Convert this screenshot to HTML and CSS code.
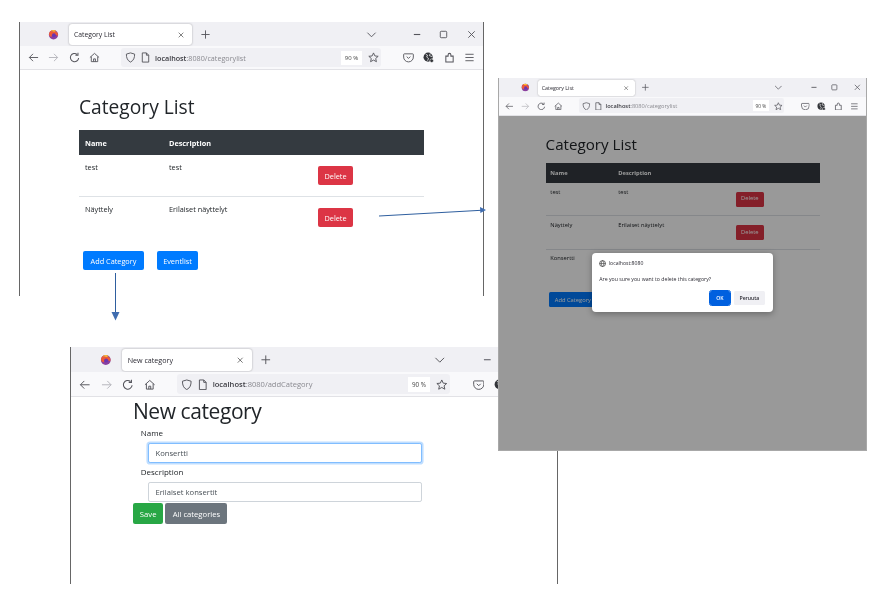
FILE: index.html
```html
<!DOCTYPE html>
<html lang="en">
<head>
<meta charset="utf-8">
<title>Category flow</title>
<link rel="stylesheet" href="styles.css">
</head>
<body>
<svg class="defs" width="0" height="0" aria-hidden="true">
  <symbol id="i-ff" viewBox="0 0 16 16"><circle cx="8" cy="8.300" r="6.800" fill="#8a3f9e"/><path d="M1.500 8c0-3 1.500-5 3.500-6l1 2c2-1 5-1 6.500.5 2 1.500 2.500 3.500 1.500 5.500-4-3-8-1-9 1.500-2-.5-3.500-2-3.500-3.500z" fill="#ee5a35"/><circle cx="8.500" cy="9" r="2.800" fill="#6a35b0"/><path d="M4 3c2-2 6-2 8 0l-3 1z" fill="#ffbd2e"/></symbol>
  <symbol id="i-x" viewBox="0 0 12 12"><path d="M2.500 2.500l7 7M9.500 2.500l-7 7" fill="none" stroke="currentColor" stroke-width="1"/></symbol>
  <symbol id="i-plus" viewBox="0 0 12 12"><path d="M6 1.500v9M1.500 6h9" fill="none" stroke="currentColor" stroke-width="1"/></symbol>
  <symbol id="i-chev" viewBox="0 0 12 12"><path d="M1.500 4l4.500 4.500L10.500 4" fill="none" stroke="currentColor" stroke-width="1"/></symbol>
  <symbol id="i-min" viewBox="0 0 12 12"><path d="M2 6h7" fill="none" stroke="currentColor" stroke-width="1.200"/></symbol>
  <symbol id="i-max" viewBox="0 0 12 12"><rect x="2.500" y="2.500" width="7" height="7" rx="1" fill="none" stroke="currentColor" stroke-width="1"/></symbol>
  <symbol id="i-back" viewBox="0 0 12 12"><path d="M11 6H1.500M5.500 2L1.500 6l4 4" fill="none" stroke="currentColor" stroke-width="1"/></symbol>
  <symbol id="i-fwd" viewBox="0 0 12 12"><path d="M1 6h9.500M6.500 2l4 4-4 4" fill="none" stroke="currentColor" stroke-width="1"/></symbol>
  <symbol id="i-reload" viewBox="0 0 12 12"><path d="M10.500 6.500A4.500 4.500 0 1 1 8.800 2.500M9.800 .8v2.700H7" fill="none" stroke="currentColor" stroke-width="1.100"/></symbol>
  <symbol id="i-home" viewBox="0 0 12 12"><path d="M1 6l5-4.500L11 6M2.500 5v5.500h7V5M5 10.500V7.500h2v3" fill="none" stroke="currentColor" stroke-width="1"/></symbol>
  <symbol id="i-shield" viewBox="0 0 12 12"><path d="M6 1l4.500 1.300c0 4-1 7-4.500 8.700C2.500 9.300 1.500 6.300 1.500 2.300z" fill="none" stroke="currentColor" stroke-width="1"/></symbol>
  <symbol id="i-page" viewBox="0 0 12 12"><path d="M2.500 1h4.500l2.500 2.500V11h-7zM7 1v2.500h2.500" fill="none" stroke="currentColor" stroke-width="1"/></symbol>
  <symbol id="i-star" viewBox="0 0 12 12"><path d="M6 1l1.500 3.300 3.600.4-2.700 2.400.8 3.500L6 8.800 2.800 10.600l.8-3.500L.9 4.700l3.600-.4z" fill="none" stroke="currentColor" stroke-width="1"/></symbol>
  <symbol id="i-pocket" viewBox="0 0 12 12"><path d="M1.500 2h9a.8.8 0 0 1 .8.800V5.500a5.300 5.300 0 0 1-10.600 0V2.800A.8.8 0 0 1 1.500 2z" fill="none" stroke="currentColor" stroke-width="1"/><path d="M4 5l2 2 2-2" fill="none" stroke="currentColor" stroke-width="1"/></symbol>
  <symbol id="i-globe" viewBox="0 0 12 12"><circle cx="5.600" cy="5.600" r="5" fill="#33353a"/><path d="M3 2.500l2 1-1 2 2 1.500-1 2.500M8 1.500L7 4l3 1" fill="none" stroke="#fff" stroke-width=".8"/><circle cx="9.500" cy="9.500" r="2" fill="#33353a" stroke="#fff" stroke-width=".6"/></symbol>
  <symbol id="i-ext" viewBox="0 0 12 12"><path d="M2 4.500h2.500V3a1.500 1.500 0 0 1 3 0v1.500H10V11H2z" fill="none" stroke="currentColor" stroke-width="1.100"/></symbol>
  <symbol id="i-menu" viewBox="0 0 12 12"><path d="M1.500 2.500h9M1.500 6h9M1.500 9.500h9" fill="none" stroke="currentColor" stroke-width="1"/></symbol>
  <symbol id="i-web" viewBox="0 0 12 12"><circle cx="6" cy="6" r="5" fill="none" stroke="currentColor" stroke-width="1.200"/><path d="M1 6h10M6 1c-3 3-3 7 0 10M6 1c3 3 3 7 0 10" fill="none" stroke="currentColor" stroke-width="1"/></symbol>
</svg>

<section class="window win-list">
  <div class="frame">
    <div class="tabstrip">
      <svg class="ff"><use href="#i-ff"/></svg>
      <div class="tab"><span class="tab-title">Category List</span><svg class="ic-s"><use href="#i-x"/></svg></div>
      <svg class="ic plus"><use href="#i-plus"/></svg>
      <div class="wincontrols">
        <svg class="ic chev"><use href="#i-chev"/></svg>
        <svg class="ic ctl-min"><use href="#i-min"/></svg>
        <svg class="ic ctl-max"><use href="#i-max"/></svg>
        <svg class="ic ctl-x"><use href="#i-x"/></svg>
      </div>
    </div>
    <div class="toolbar">
      <span class="tb"><svg class="ic"><use href="#i-back"/></svg></span>
      <span class="tb faint"><svg class="ic"><use href="#i-fwd"/></svg></span>
      <span class="tb"><svg class="ic"><use href="#i-reload"/></svg></span>
      <span class="tb"><svg class="ic"><use href="#i-home"/></svg></span>
      <div class="urlbar">
        <svg class="ic shield"><use href="#i-shield"/></svg>
        <svg class="ic pg"><use href="#i-page"/></svg>
        <span class="url"><b>localhost</b>:8080/categorylist</span>
        <span class="zoomchip">90 %</span>
        <svg class="ic star"><use href="#i-star"/></svg>
      </div>
      <div class="tb-right">
        <span class="tb"><svg class="ic"><use href="#i-pocket"/></svg></span>
        <span class="tb"><svg class="ic"><use href="#i-globe"/></svg></span>
        <span class="tb"><svg class="ic"><use href="#i-ext"/></svg></span>
        <span class="tb"><svg class="ic"><use href="#i-menu"/></svg></span>
      </div>
    </div>
    <main class="page list-page">
      <h1 class="title">Category List</h1>
      <table class="cats">
        <thead><tr><th class="c1">Name</th><th class="c2">Description</th><th></th></tr></thead>
        <tbody>
          <tr><td>test</td><td>test</td><td class="act"><button class="btn red">Delete</button></td></tr>
          <tr><td>Näyttely</td><td>Erilaiset näyttelyt</td><td class="act"><button class="btn red">Delete</button></td></tr>
        </tbody>
      </table>
      <div class="actions"><button class="btn blue">Add Category</button><button class="btn blue">Eventlist</button></div>
    </main>
  </div>
</section>

<section class="window win-add">
  <div class="frame">
    <div class="tabstrip">
      <svg class="ff"><use href="#i-ff"/></svg>
      <div class="tab"><span class="tab-title">New category</span><svg class="ic-s"><use href="#i-x"/></svg></div>
      <svg class="ic plus"><use href="#i-plus"/></svg>
      <div class="wincontrols">
        <svg class="ic chev"><use href="#i-chev"/></svg>
        <svg class="ic ctl-min"><use href="#i-min"/></svg>
        <svg class="ic ctl-max"><use href="#i-max"/></svg>
        <svg class="ic ctl-x"><use href="#i-x"/></svg>
      </div>
    </div>
    <div class="toolbar">
      <span class="tb"><svg class="ic"><use href="#i-back"/></svg></span>
      <span class="tb faint"><svg class="ic"><use href="#i-fwd"/></svg></span>
      <span class="tb"><svg class="ic"><use href="#i-reload"/></svg></span>
      <span class="tb"><svg class="ic"><use href="#i-home"/></svg></span>
      <div class="urlbar">
        <svg class="ic shield"><use href="#i-shield"/></svg>
        <svg class="ic pg"><use href="#i-page"/></svg>
        <span class="url"><b>localhost</b>:8080/addCategory</span>
        <span class="zoomchip">90 %</span>
        <svg class="ic star"><use href="#i-star"/></svg>
      </div>
      <div class="tb-right">
        <span class="tb"><svg class="ic"><use href="#i-pocket"/></svg></span>
        <span class="tb"><svg class="ic"><use href="#i-globe"/></svg></span>
        <span class="tb"><svg class="ic"><use href="#i-ext"/></svg></span>
        <span class="tb"><svg class="ic"><use href="#i-menu"/></svg></span>
      </div>
    </div>
    <main class="page add-page">
      <h1 class="title add-title">New category</h1>
      <form class="form">
        <label class="lbl">Name</label>
        <input class="field focus" value="Konsertti">
        <label class="lbl">Description</label>
        <input class="field" value="Erilaiset konsertit">
      </form>
      <div class="add-actions"><button class="btn green">Save</button><button class="btn gray">All categories</button></div>
    </main>
  </div>
</section>

<section class="window win-confirm">
  <div class="frame">
    <div class="tabstrip">
      <svg class="ff"><use href="#i-ff"/></svg>
      <div class="tab"><span class="tab-title">Category List</span><svg class="ic-s"><use href="#i-x"/></svg></div>
      <svg class="ic plus"><use href="#i-plus"/></svg>
      <div class="wincontrols">
        <svg class="ic chev"><use href="#i-chev"/></svg>
        <svg class="ic ctl-min"><use href="#i-min"/></svg>
        <svg class="ic ctl-max"><use href="#i-max"/></svg>
        <svg class="ic ctl-x"><use href="#i-x"/></svg>
      </div>
    </div>
    <div class="toolbar">
      <span class="tb"><svg class="ic"><use href="#i-back"/></svg></span>
      <span class="tb faint"><svg class="ic"><use href="#i-fwd"/></svg></span>
      <span class="tb"><svg class="ic"><use href="#i-reload"/></svg></span>
      <span class="tb"><svg class="ic"><use href="#i-home"/></svg></span>
      <div class="urlbar">
        <svg class="ic shield"><use href="#i-shield"/></svg>
        <svg class="ic pg"><use href="#i-page"/></svg>
        <span class="url"><b>localhost</b>:8080/categorylist</span>
        <span class="zoomchip">90 %</span>
        <svg class="ic star"><use href="#i-star"/></svg>
      </div>
      <div class="tb-right">
        <span class="tb"><svg class="ic"><use href="#i-pocket"/></svg></span>
        <span class="tb"><svg class="ic"><use href="#i-globe"/></svg></span>
        <span class="tb"><svg class="ic"><use href="#i-ext"/></svg></span>
        <span class="tb"><svg class="ic"><use href="#i-menu"/></svg></span>
      </div>
    </div>
    <main class="page list-page">
      <h1 class="title">Category List</h1>
      <table class="cats">
        <thead><tr><th class="c1">Name</th><th class="c2">Description</th><th></th></tr></thead>
        <tbody>
          <tr><td>test</td><td>test</td><td class="act"><button class="btn red">Delete</button></td></tr>
          <tr><td>Näyttely</td><td>Erilaiset näyttelyt</td><td class="act"><button class="btn red">Delete</button></td></tr>
          <tr><td>Konsertti</td><td></td><td class="act"><span class="btn-slot"></span></td></tr>
        </tbody>
      </table>
      <div class="actions"><button class="btn blue">Add Category</button></div>
      <div class="scrim"></div>
      <div class="dialog">
        <div class="dlg-host"><svg class="ic-web"><use href="#i-web"/></svg>localhost:8080</div>
        <p class="dlg-msg">Are you sure you want to delete this category?</p>
        <div class="dlg-btns"><button class="dbtn ok">OK</button><button class="dbtn cancel">Peruuta</button></div>
      </div>
    </main>
  </div>
</section>

<svg class="arrows" width="895" height="614" aria-hidden="true">
  <path d="M379 216L481 210.300" stroke="#2f5f9f" stroke-width="1" fill="none"/>
  <path d="M486 210l-6-3 .4 6z" fill="#3f6db0"/>
  <path d="M115.500 273V313" stroke="#2f5f9f" stroke-width="1" fill="none"/>
  <path d="M111.500 312h8l-4 8.500z" fill="#3f6db0"/>
</svg>
</body>
</html>
```
FILE: styles.css
```css
* { box-sizing: border-box; }
html, body { margin: 0; padding: 0; }
body {
  position: relative;
  width: 895px;
  height: 614px;
  overflow: hidden;
  background: #fff;
  font-family: "Open Sans", "Liberation Sans", sans-serif;
  color: #212529;
}
.defs { position: absolute; }
.arrows { position: absolute; left: 0; top: 0; pointer-events: none; }

/* windows sit on a free canvas */
.window { position: absolute; display: flex; flex-direction: column; overflow: hidden; background: #fff; filter: blur(.35px); }
.win-list { left: 19px; top: 22px; width: 465px; height: 274px; border-left: 1px solid #666; border-right: 1px solid #666; }
.win-add { left: 70px; top: 347px; width: 488px; height: 237px; border-left: 1px solid #666; border-right: 1px solid #666; }
.win-confirm { left: 498px; top: 78px; width: 369px; height: 373px; border: 1px solid #a8a8a8; border-top: 0; }
.frame { flex: 1; display: flex; flex-direction: column; min-height: 0; }
.win-add .frame { zoom: 1.05; }
.win-confirm .frame { zoom: .79; }

/* browser chrome */
.tabstrip { height: 24px; flex: none; display: flex; align-items: center; background: #f0f0f4; padding-left: 28px; }
.ff { width: 11px; height: 11px; margin-right: 10px; }
.tab { width: 123px; height: 21px; margin-top: 1px; background: #fff; border-radius: 3px; box-shadow: 0 0 2px rgba(0,0,0,.35); display: flex; align-items: center; justify-content: space-between; padding: 0 7px 0 5px; font-size: 6.800px; color: #2b2a33; }
.ic-s { width: 8px; height: 8px; color: #444; }
.ic { width: 11px; height: 11px; color: #55555c; flex: none; }
.plus { margin-left: 8px; }
.wincontrols { margin-left: auto; display: flex; align-items: center; padding-right: 6px; }
.ctl-min { margin-left: 35px; }
.ctl-max { margin-left: 15px; }
.ctl-x { margin-left: 17px; }
.toolbar { height: 24px; flex: none; display: flex; align-items: center; background: #f9f9fb; border-bottom: 1px solid #e2e2e6; padding-left: 3px; }
.tb { width: 20.500px; display: flex; justify-content: center; }
.faint .ic { color: #b4b4ba; }
.urlbar { margin-left: 16px; width: 260px; height: 19px; background: #f0f0f4; border-radius: 3px; display: flex; align-items: center; padding-left: 4px; }
.shield { margin-right: 4px; }
.pg { margin-right: 4px; }
.url { font-size: 7.200px; color: #8a8a90; white-space: nowrap; }
.url b { font-weight: 600; color: #3a3a40; }
.zoomchip { margin-left: auto; background: #fff; width: 21px; height: 14px; display: flex; align-items: center; justify-content: center; font-size: 6px; color: #444; }
.star { margin: 0 2px 0 6px; }
.tb-right { margin-left: 17px; display: flex; }

/* page */
.page { position: relative; flex: 1; min-height: 0; background: #fff; }
.list-page { padding: 24px 0 0 59px; }
.title { margin: 0; font-size: 19.200px; line-height: 25px; font-weight: 400; color: #212529; }
.cats { margin-top: 11px; width: 345px; border-collapse: collapse; table-layout: fixed; font-size: 7.300px; }
.win-confirm .cats { width: 347px; }
.cats th { background: #343a40; color: #fff; font-weight: 700; text-align: left; padding: 0 6px; height: 25px; }
.c1 { width: 84px; }
.win-confirm .c1 { width: 86px; }
.c2 { width: 149px; }
.cats td { vertical-align: top; padding: 7px 6px 11px; border-bottom: 1px solid #dee2e6; line-height: 10px; }
.cats tbody tr:last-child td { border-bottom: 0; }
.cats td.act { padding-top: 11px; padding-bottom: 11px; }
.btn { border: 1px solid transparent; font: inherit; font-size: 7.300px; border-radius: 2px; color: #fff; padding: 0; display: block; }
.btn-slot { display: block; height: 19px; }
.red { background: #dc3545; width: 35px; height: 19px; }
.blue { background: #007bff; height: 19px; }
.actions { display: flex; gap: 13px; margin-top: 13px; padding-left: 4px; }
.blue:first-child { width: 61px; }
.blue:last-child:not(:first-child) { width: 41px; }

/* confirm overlay */
.scrim { position: absolute; inset: 0; background: rgba(0,0,0,.4); }
.dialog { position: absolute; left: 118px; top: 173px; width: 229px; height: 75px; background: #fff; border-radius: 5px; box-shadow: 0 2px 8px rgba(0,0,0,.3); padding: 9px 9px 7px; display: flex; flex-direction: column; }
.dlg-host { display: flex; align-items: center; gap: 3px; font-size: 6.500px; color: #2b2a33; }
.ic-web { width: 9px; height: 9px; color: #333; }
.dlg-msg { margin: 11px 0 0; font-size: 6.600px; color: #2b2a33; }
.dlg-btns { margin-top: auto; display: flex; justify-content: flex-end; gap: 5px; padding-right: 1px; padding-bottom: 2px; }
.dbtn { border: 0; font: inherit; font-size: 6.500px; font-weight: 600; height: 17px; border-radius: 2px; padding: 0; }
.ok { width: 25px; background: #0060df; color: #fff; outline: 1.500px solid #0060df; outline-offset: 1px; }
.cancel { width: 40px; background: #f0f0f4; color: #2b2a33; }

/* add form */
.add-page { padding-left: 59px; }
.add-title { font-size: 20px; letter-spacing: -.4px; line-height: 26px; margin-top: 1px; }
.form { display: flex; flex-direction: column; align-items: flex-start; padding-left: 7.500px; margin-top: 1px; }
.lbl { font-size: 7.600px; line-height: 11px; color: #212529; }
.field { margin: 4.500px 0 2.500px 7px; width: 261px; height: 19px; border: 1px solid #ced4da; border-radius: 2px; font: inherit; font-size: 7.300px; color: #495057; padding: 0 6px; background: #fff; }
.field.focus { border-color: #80bdff; box-shadow: 0 0 0 1.500px rgba(0,123,255,.25); }
.add-actions { display: flex; gap: 2px; margin-top: -1px; }
.green { background: #28a745; width: 29px; height: 20px; }
.gray { background: #6c757d; width: 59px; height: 20px; }
```
